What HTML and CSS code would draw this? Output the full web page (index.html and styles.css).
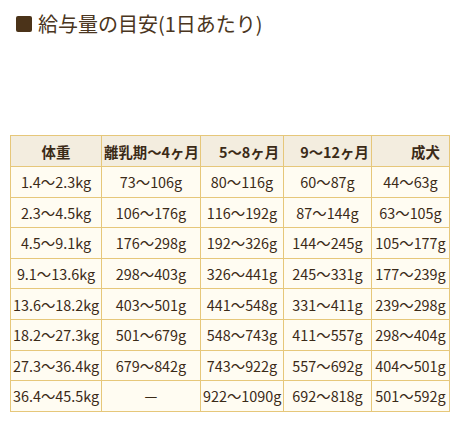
FILE: index.html
```html
<!DOCTYPE html>
<html lang="ja">
<head>
<meta charset="utf-8">
<link rel="stylesheet" href="styles.css">
</head>
<body>
<div class="page">
  <h2 class="title"><span class="mark"></span>給与量の目安(1日あたり)</h2>
  <table class="feed">
    <colgroup>
      <col class="c1"><col class="c2"><col class="c3"><col class="c4"><col class="c5">
    </colgroup>
    <thead>
      <tr>
        <th>体重</th>
        <th>離乳期～4ヶ月</th>
        <th class="sh">5～8ヶ月</th>
        <th class="sh">9～12ヶ月</th>
        <th class="sh2">成犬</th>
      </tr>
    </thead>
    <tbody>
      <tr><td>1.4～2.3kg</td><td>73～106g</td><td>80～116g</td><td>60～87g</td><td>44～63g</td></tr>
      <tr><td>2.3～4.5kg</td><td>106～176g</td><td>116～192g</td><td>87～144g</td><td>63～105g</td></tr>
      <tr><td>4.5～9.1kg</td><td>176～298g</td><td>192～326g</td><td>144～245g</td><td>105～177g</td></tr>
      <tr><td>9.1～13.6kg</td><td>298～403g</td><td>326～441g</td><td>245～331g</td><td>177～239g</td></tr>
      <tr><td>13.6～18.2kg</td><td>403～501g</td><td>441～548g</td><td>331～411g</td><td>239～298g</td></tr>
      <tr><td>18.2～27.3kg</td><td>501～679g</td><td>548～743g</td><td>411～557g</td><td>298～404g</td></tr>
      <tr><td>27.3～36.4kg</td><td>679～842g</td><td>743～922g</td><td>557～692g</td><td>404～501g</td></tr>
      <tr><td>36.4～45.5kg</td><td>—</td><td>922～1090g</td><td>692～818g</td><td>501～592g</td></tr>
    </tbody>
  </table>
</div>
</body>
</html>
```
FILE: styles.css
```css
html, body {
  margin: 0;
  padding: 0;
  background: #ffffff;
}
body {
  font-family: "Noto Sans CJK JP", "Noto Sans", sans-serif;
  color: #3b2a17;
}
.page {
  padding: 9px 0 0 10px;
}
.title {
  display: flex;
  align-items: center;
  gap: 6px;
  margin: 0 0 96px 6px;
  font-size: 20px;
  line-height: 30px;
  font-weight: 400;
  color: #4a3520;
}
.mark {
  width: 16px;
  height: 16px;
  border-radius: 2px;
  background: #4b3319;
  flex: none;
}
.feed {
  border-collapse: collapse;
  table-layout: fixed;
  width: 439px;
  font-size: 14.4px;
}
.c1 { width: 91px; }
.c2 { width: 99px; }
.c3 { width: 83px; }
.c4 { width: 88px; }
.c5 { width: 78px; }
.feed th, .feed td {
  border: 1px solid #e6c77a;
  text-align: center;
  padding: 0 2px;
  white-space: nowrap;
}
.feed th {
  background: #f3eddf;
  font-weight: 700;
  height: 30px;
  color: #3b2a17;
}
.feed td {
  background: #fffcf2;
  height: 29.6px;
}
.feed th.sh { padding-left: 16px; }
.feed th.sh2 { padding-left: 32px; }
```
